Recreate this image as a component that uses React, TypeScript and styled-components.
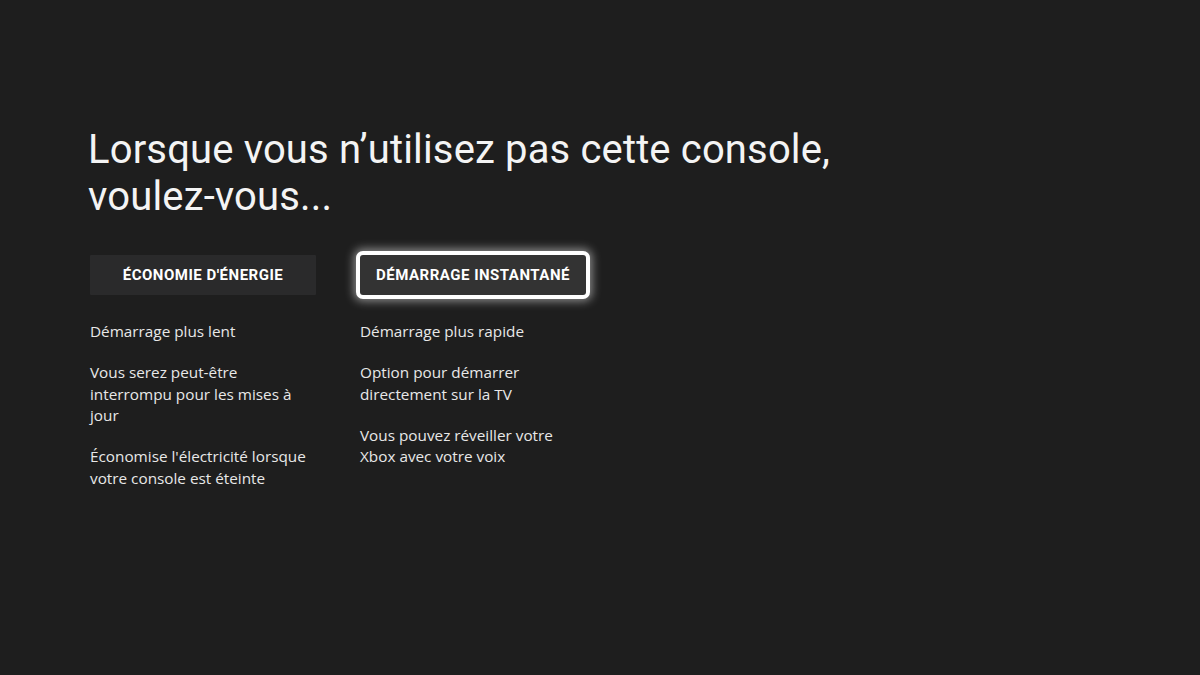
import React from "react";
import styled, { createGlobalStyle } from "styled-components";

const Global = createGlobalStyle`
  html, body { margin: 0; padding: 0; background: #1e1e1e; }
  body { width: 1200px; height: 675px; overflow: hidden; }
`;

const Page = styled.main`
  width: 1200px;
  height: 675px;
  box-sizing: border-box;
  background: #1e1e1e;
  padding: 126px 0 0 88px;
  color: #ffffff;
`;

const Title = styled.h1`
  margin: 0;
  font-family: Roboto, "Liberation Sans", sans-serif;
  font-weight: 400;
  font-size: 40px;
  line-height: 47px;
  color: #f4f4f4;
  letter-spacing: 0.15px;
`;

const Options = styled.div`
  display: grid;
  grid-template-columns: 226px 226px;
  column-gap: 44px;
  margin: 35px 0 0 2px;
`;

const Column = styled.section`
  display: flex;
  flex-direction: column;
`;

const OptionButton = styled.button<{ $focused?: boolean }>`
  height: 40px;
  width: 100%;
  padding: 0;
  border: none;
  border-radius: ${(p) => (p.$focused ? "3px" : "1px")};
  background: ${(p) => (p.$focused ? "#333333" : "#2a2a2b")};
  color: #ffffff;
  font-family: Roboto, "Liberation Sans", sans-serif;
  font-weight: 700;
  font-size: 15px;
  letter-spacing: 0.5px;
  text-transform: uppercase;
  cursor: pointer;
  box-shadow: ${(p) =>
    p.$focused
      ? "0 0 0 4px #ffffff, 0 0 10px 6px rgba(255,255,255,0.5)"
      : "none"};
`;

const Benefits = styled.ul`
  list-style: none;
  margin: 26px 0 0 0;
  padding: 0;
  display: flex;
  flex-direction: column;
  gap: 19.5px;
`;

const Benefit = styled.li`
  font-family: "Open Sans", "Noto Sans", sans-serif;
  font-size: 15.3px;
  line-height: 21.5px;
  color: #e8e8e8;
`;

const options = [
  {
    label: "Économie d'énergie",
    focused: false,
    items: [
      "Démarrage plus lent",
      "Vous serez peut-être interrompu pour les mises à jour",
      "Économise l'électricité lorsque votre console est éteinte",
    ],
  },
  {
    label: "Démarrage instantané",
    focused: true,
    items: [
      "Démarrage plus rapide",
      "Option pour démarrer directement sur la TV",
      "Vous pouvez réveiller votre Xbox avec votre voix",
    ],
  },
];

export default function App() {
  return (
    <>
      <Global />
      <Page>
        <Title>
          Lorsque vous n’utilisez pas cette console,
          <br />
          voulez-vous...
        </Title>
        <Options>
          {options.map((o) => (
            <Column key={o.label}>
              <OptionButton $focused={o.focused}>{o.label}</OptionButton>
              <Benefits>
                {o.items.map((t) => (
                  <Benefit key={t}>{t}</Benefit>
                ))}
              </Benefits>
            </Column>
          ))}
        </Options>
      </Page>
    </>
  );
}
